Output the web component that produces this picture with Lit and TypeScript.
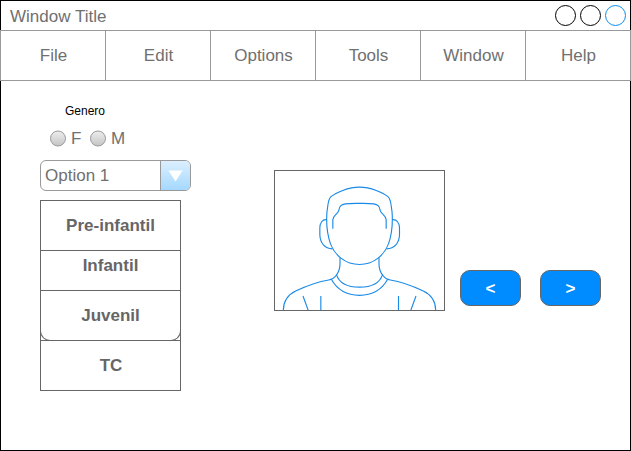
import { LitElement, html, css } from "lit";
import { customElement } from "lit/decorators.js";

@customElement("user-silhouette")
class UserSilhouette extends LitElement {
  static styles = css`
    :host { display: block; box-sizing: border-box; width: 171px; height: 141px; border: 1px solid #666; }
    svg { display: block; width: 169px; height: 139px; }
    .line { fill: none; stroke: #1a8ae6; stroke-width: 3.4; stroke-linecap: butt; stroke-linejoin: round; }
  `;
  render() {
    return html`<svg viewBox="21 18 507 417"><g class="line">
      <path d="M274.500 66.500C241 66.500 203 83 189 95C179 104 181 118 177 139C174 175 178 208 187 235C200 271 232 298.500 274.500 298.500C317 298.500 349 271 362 235C371 208 375 175 372 139C368 118 370 104 360 95C346 83 308 66.500 274.500 66.500Z"/>
      <path d="M194.500 191V164C194.500 151 210 147 212.500 136C214 122 221 119 232 116.500C246 114.500 260 115 274.500 115C289 115 303 114.500 317 116.500C328 119 335 122 336.500 136C339 147 354.500 151 354.500 164V191"/>
      <path d="M176 164C163 162 155.500 174 155.500 190V211C157 234 170 251 193 251.500M373 164C386 162 394.500 174 394.500 190V211C393 234 380 251 356 251.500"/>
      <path d="M216 278V297C216 314 210 325 203 333Q196 343 182 345C150 350 115 363 83 378C60 389 46 411 46 437M333 278V297C333 314 339 325 346 333Q353 343 367 345C399 350 434 363 466 378C489 389 503 411 503 437"/>
      <path d="M205 328C214 356 236 366.500 274.500 366.500C313 366.500 335 356 344 328M190 343C209 377 236 391 274.500 391C313 391 340 377 359 343"/>
      <path d="M105 393L121 437M158.500 393V437M444 393L428 437M391.500 393V437"/>
    </g></svg>`;
  }
}

@customElement("app-root")
class AppRoot extends LitElement {
  static styles = css`
    :host {
      display: block; box-sizing: border-box; width: 631px; height: 451px;
      border: 1px solid #000; background: #fff; color: #707070;
      font: 17px/20px "Liberation Sans", Arial, sans-serif;
    }
    .title { display: flex; justify-content: space-between; height: 29px; padding: 0 3px 0 9px; }
    .title span { line-height: 31px; }
    .dots { display: flex; gap: 3px; padding-top: 3px; }
    .dots svg { display: block; width: 22px; height: 22px; }
    .dot { fill: none; stroke: #000; }
    .close { stroke: #0c8ce9; }
    .menu { display: grid; grid-template-columns: 104px repeat(5, 105px); margin: 0 -1px; border: 1px solid #999; height: 51px; box-sizing: border-box; }
    .item { text-align: center; line-height: 50px; padding-left: 1px; }
    .item + .item { border-left: 1px solid #999; }
    .body { display: flex; padding: 19px 29px 0 39px; }
    .left { width: 151px; }
    .legend { color: #000; font-size: 12px; line-height: 22px; padding-left: 25px; }
    .radios { display: flex; padding: 7px 0 0 10px; }
    .radio { display: flex; align-items: center; width: 40px; height: 20px; }
    .radio svg { width: 17px; height: 18px; margin-right: 4px; }
    .select { display: flex; box-sizing: border-box; height: 31px; margin-top: 11px; border: 1px solid #999; border-radius: 6px; overflow: hidden; }
    .value { width: 119px; box-sizing: border-box; padding-left: 4px; line-height: 29px; }
    .arrow { flex: 1; border-left: 1px solid #999; background: linear-gradient(#dceffe, #a5d8ff); }
    .arrow svg { display: block; width: 29px; height: 29px; }
    .list { width: 141px; box-sizing: border-box; margin-top: 9px; border: 1px solid #666; color: #666; font-weight: bold; text-align: center; }
    .row { position: relative; height: 49px; line-height: 49px; }
    .row + .row { border-top: 1px solid #666; }
    .row:last-child { padding-left: 1px; }
    .short { height: 39px; line-height: 29px; }
    .rounded::after { content: ""; position: absolute; inset: 0 -1px -1px; border: 1px solid #666; border-top: 0; border-radius: 0 0 10px 10px; }
    user-silhouette { margin: 70px 15px 0 83px; }
    .nav { display: flex; gap: 19px; padding-top: 170px; }
    .button { box-sizing: border-box; width: 61px; height: 36px; border: 1px solid #666; border-radius: 10px; background: #008cff; color: #fff; font-weight: bold; line-height: 35px; text-align: center; }
  `;
  render() {
    return html`
      <div class="title"><span>Window Title</span>
        <div class="dots">${["dot", "dot", "dot close"].map((c) => html`<svg viewBox="0 0 22 22"><circle class=${c} cx="10.500" cy="11.500" r="10"/></svg>`)}</div>
      </div>
      <div class="menu">${["File", "Edit", "Options", "Tools", "Window", "Help"].map((t) => html`<div class="item">${t}</div>`)}</div>
      <div class="body">
        <div class="left">
          <div class="legend">Genero</div>
          <div class="radios">${["F", "M"].map((t) => html`<div class="radio"><svg viewBox="0 0 17 18">
            <defs><linearGradient id="g" x2="0" y2="1"><stop stop-color="#eee"/><stop offset="1" stop-color="#c4c4c4"/></linearGradient></defs>
            <circle cx="8" cy="8.500" r="7.500" fill="url(#g)" stroke="#999"/></svg>${t}</div>`)}</div>
          <div class="select"><div class="value">Option 1</div><div class="arrow"><svg viewBox="0 0 29 29"><path d="M7.500 9.500H21.500L14.500 20.500Z" fill="#fff"/></svg></div></div>
          <div class="list">
            <div class="row">Pre-infantil</div>
            <div class="row short">Infantil</div>
            <div class="row rounded">Juvenil</div>
            <div class="row">TC</div>
          </div>
        </div>
        <user-silhouette></user-silhouette>
        <div class="nav"><div class="button">&lt;</div><div class="button">&gt;</div></div>
      </div>`;
  }
}
